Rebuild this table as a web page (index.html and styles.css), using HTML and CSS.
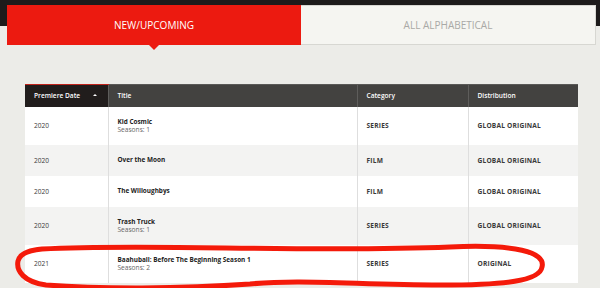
FILE: index.html
```html
<!DOCTYPE html>
<html>
<head>
<meta charset="utf-8">
<link rel="stylesheet" href="styles.css">
</head>
<body>
<div class="page">
  <div class="tabs">
    <div class="tab tab-active">NEW/UPCOMING</div>
    <div class="tab tab-idle">ALL ALPHABETICAL</div>
  </div>
  <div class="table-wrap">
    <table class="grid">
      <thead>
        <tr>
          <th class="c1 sorted"><span>Premiere Date</span><span class="arrow"></span></th>
          <th class="c2">Title</th>
          <th class="c3">Category</th>
          <th class="c4">Distribution</th>
        </tr>
      </thead>
      <tbody>
        <tr class="tall">
          <td>2020</td>
          <td><div class="t">Kid Cosmic</div><div class="s">Seasons: 1</div></td>
          <td class="b">SERIES</td>
          <td class="b">GLOBAL ORIGINAL</td>
        </tr>
        <tr class="alt short">
          <td>2020</td>
          <td><div class="t">Over the Moon</div></td>
          <td class="b">FILM</td>
          <td class="b">GLOBAL ORIGINAL</td>
        </tr>
        <tr class="short">
          <td>2020</td>
          <td><div class="t">The Willoughbys</div></td>
          <td class="b">FILM</td>
          <td class="b">GLOBAL ORIGINAL</td>
        </tr>
        <tr class="alt tall">
          <td>2020</td>
          <td><div class="t">Trash Truck</div><div class="s">Seasons: 1</div></td>
          <td class="b">SERIES</td>
          <td class="b">GLOBAL ORIGINAL</td>
        </tr>
        <tr class="tall">
          <td>2021</td>
          <td><div class="t">Baahubali: Before The Beginning Season 1</div><div class="s">Seasons: 2</div></td>
          <td class="b">SERIES</td>
          <td class="b">ORIGINAL</td>
        </tr>
      </tbody>
    </table>
  </div>
  <svg class="scribble" width="600" height="288" viewBox="0 0 600 288">
    <path d="M 42 249 C 150 243, 300 253, 450 247 C 515 244, 546 252, 542 267 C 540 281, 505 285, 440 285 C 360 285, 300 279, 250 284 C 180 289, 100 289, 46 285 C 24 282, 16 271, 18 261 C 20 253, 30 250, 42 249 Z" fill="none" stroke="#f41a0a" stroke-width="5" stroke-linecap="round" stroke-linejoin="round"/>
  </svg>
</div>
</body>
</html>
```

FILE: styles.css
```css
html, body {
  margin: 0;
  padding: 0;
}
body {
  width: 600px;
  height: 288px;
  overflow: hidden;
  background: #ecece8;
  font-family: "Open Sans", "Liberation Sans", sans-serif;
}
.page {
  position: relative;
  width: 600px;
  height: 288px;
  background: linear-gradient(#1d1b1b 0, #1d1b1b 26px, #ecece8 26px);
}
.tabs {
  display: flex;
  padding: 5px 4px 0 7px;
  height: 40px;
}
.tab {
  height: 40px;
  box-sizing: border-box;
  display: flex;
  align-items: center;
  justify-content: center;
  font-size: 10px;
}
.tab-active {
  position: relative;
  width: 294px;
  background: #ec1a10;
  color: #fff;
}
.tab-active::after {
  content: "";
  position: absolute;
  left: 142px;
  bottom: -5px;
  border-left: 5px solid transparent;
  border-right: 5px solid transparent;
  border-top: 5px solid #ec1a10;
}
.tab-idle {
  flex: 1;
  background: #f5f5f1;
  border: 1px solid #d7d7d2;
  border-left: none;
  color: #a9a9a6;
}
.table-wrap {
  padding: 39px 22px 0 25px;
}
.grid {
  width: 553px;
  border-collapse: collapse;
  table-layout: fixed;
  font-size: 6.6px;
}
.grid th {
  height: 22px;
  padding: 0 0 0 9px;
  text-align: left;
  background: #434240;
  color: #fff;
  font-weight: 600;
  font-size: 6.6px;
  border-top: 1px solid #5a5957;
  border-left: 1px solid #5e5d5b;
  box-sizing: border-box;
}
.grid th.sorted {
  background: #211d1c;
  border-top: 1px solid #c0231b;
  border-left: none;
}
.grid th.sorted span:first-child {
  display: inline-block;
  width: 59px;
}
.arrow {
  display: inline-block;
  vertical-align: middle;
  border-left: 2px solid transparent;
  border-right: 2px solid transparent;
  border-bottom: 2.5px solid #fff;
  margin-top: -2px;
}
.c1 { width: 83px; }
.c2 { width: 249px; }
.c3 { width: 111px; }
.c4 { width: 110px; }
.grid td {
  padding: 0 0 0 9px;
  background: #fff;
  color: #3a3a3a;
  border-left: 1px solid #dedede;
  vertical-align: middle;
}
.grid td:first-child {
  border-left: none;
}
.grid tr.alt td {
  background: #f3f3f2;
}
.grid tr.tall td { height: 38px; }
.grid tr.short td { height: 31px; }
.t {
  font-weight: 700;
  color: #222;
  line-height: 8px;
  font-size: 6.4px;
}
.s {
  color: #666;
  line-height: 8px;
}
.b {
  font-weight: 700;
  color: #222;
  letter-spacing: 0.2px;
}
.scribble {
  position: absolute;
  left: 0;
  top: 0;
  pointer-events: none;
}
```
